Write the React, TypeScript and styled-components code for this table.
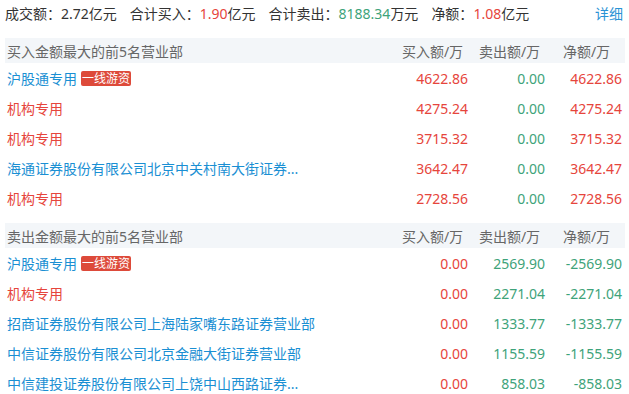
import React from 'react'
import styled, { createGlobalStyle } from "styled-components";

const GlobalStyle = createGlobalStyle`
  body {
    margin: 0;
    background: #fff;
    font-family: "Noto Sans", "Noto Sans CJK SC", sans-serif;
    font-size: 14px;
  }
`;

const Page = styled.div`
  width: 620px;
  padding-left: 5px;
`;

const Summary = styled.div`
  display: flex;
  align-items: center;
  height: 26px;
  margin-bottom: 12px;
  color: #333;
  gap: 13px;
`;

const Item = styled.span``;

const Num = styled.span<{ $tone: 'red' | 'green' }>`
  color: ${(p) => (p.$tone === 'red' ? '#e6453c' : '#3ea37a')};
`;

const Detail = styled.a`
  margin-left: auto;
  margin-right: 2px;
  color: #2a93d5;
  text-decoration: none;
`;

const Table = styled.div`
  margin-bottom: 10px;
`;

const HeadRow = styled.div`
  display: grid;
  grid-template-columns: 1fr 77px 77px 77px;
  height: 25px;
  align-items: center;
  background: #f3f6f9;
  color: #666;
`;

const HeadName = styled.div`
  padding-left: 2px;
`;

const HeadCell = styled.div`
  text-align: center;
`;

const Row = styled.div`
  display: grid;
  grid-template-columns: 1fr 77px 77px 77px;
  height: 30px;
  align-items: center;
`;

const Name = styled.div<{ $inst?: boolean }>`
  padding-left: 2px;
  display: flex;
  align-items: center;
  gap: 4px;
  color: ${(p) => (p.$inst ? '#e6453c' : '#1a8fd3')};
  white-space: nowrap;
`;

const Badge = styled.span`
  display: inline-block;
  background: #dd4a3a;
  color: #fff;
  font-size: 12px;
  line-height: 15px;
  padding: 0 1px;
  border-radius: 2px;
`;

const Cell = styled.div<{ $tone: 'red' | 'green' }>`
  text-align: right;
  padding-right: 3px;
  color: ${(p) => (p.$tone === 'red' ? '#e6453c' : '#3ea37a')};
`;

type Dept = { name: string; buy: string; sell: string; net: string; hot?: boolean };

const buyList: Dept[] = [
  { name: '沪股通专用', buy: '4622.86', sell: '0.00', net: '4622.86', hot: true },
  { name: '机构专用', buy: '4275.24', sell: '0.00', net: '4275.24' },
  { name: '机构专用', buy: '3715.32', sell: '0.00', net: '3715.32' },
  { name: '海通证券股份有限公司北京中关村南大街证券...', buy: '3642.47', sell: '0.00', net: '3642.47' },
  { name: '机构专用', buy: '2728.56', sell: '0.00', net: '2728.56' },
];

const sellList: Dept[] = [
  { name: '沪股通专用', buy: '0.00', sell: '2569.90', net: '-2569.90', hot: true },
  { name: '机构专用', buy: '0.00', sell: '2271.04', net: '-2271.04' },
  { name: '招商证券股份有限公司上海陆家嘴东路证券营业部', buy: '0.00', sell: '1333.77', net: '-1333.77' },
  { name: '中信证券股份有限公司北京金融大街证券营业部', buy: '0.00', sell: '1155.59', net: '-1155.59' },
  { name: '中信建投证券股份有限公司上饶中山西路证券...', buy: '0.00', sell: '858.03', net: '-858.03' },
];

const DeptTable = ({ title, list }: { title: string; list: Dept[] }) => (
  <Table>
    <HeadRow>
      <HeadName>{title}</HeadName>
      <HeadCell>买入额/万</HeadCell>
      <HeadCell>卖出额/万</HeadCell>
      <HeadCell>净额/万</HeadCell>
    </HeadRow>
    {list.map((d, i) => (
      <Row key={i}>
        <Name $inst={d.name === '机构专用'}>
          {d.name}
          {d.hot ? <Badge>一线游资</Badge> : null}
        </Name>
        <Cell $tone="red">{d.buy}</Cell>
        <Cell $tone="green">{d.sell}</Cell>
        <Cell $tone={d.net.startsWith('-') ? 'green' : 'red'}>{d.net}</Cell>
      </Row>
    ))}
  </Table>
);

const App = () => {
  return (
    <>
      <GlobalStyle />
      <Page>
        <Summary>
          <Item>成交额：2.72亿元</Item>
          <Item>合计买入：<Num $tone="red">1.90</Num>亿元</Item>
          <Item>合计卖出：<Num $tone="green">8188.34</Num>万元</Item>
          <Item>净额：<Num $tone="red">1.08</Num>亿元</Item>
          <Detail>详细</Detail>
        </Summary>
        <DeptTable title="买入金额最大的前5名营业部" list={buyList} />
        <DeptTable title="卖出金额最大的前5名营业部" list={sellList} />
      </Page>
    </>
  );
};

export default App
